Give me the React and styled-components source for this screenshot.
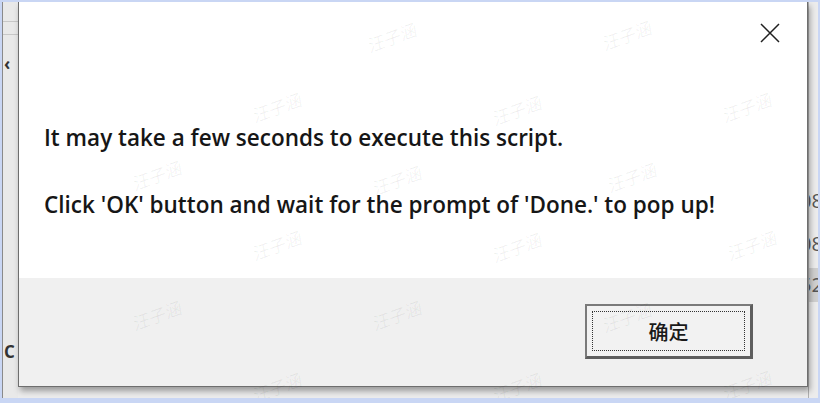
import React from 'react';
import styled, { createGlobalStyle } from 'styled-components';

const GlobalStyle = createGlobalStyle`
  html, body {
    margin: 0;
    padding: 0;
    background: #c9d6f4;
  }
  body {
    font-family: "Open Sans", "Noto Sans", "Noto Sans CJK SC", sans-serif;
  }
`;

const WATERMARKS = [
  [365, 22], [600, 20], [250, 92], [490, 95], [720, 92], [130, 160],
  [370, 165], [605, 162], [250, 230], [490, 232], [725, 230], [130, 300],
  [370, 300], [600, 302], [250, 372], [490, 372], [720, 370],
];

const App = () => {
  return (
    <>
      <GlobalStyle />
      <Frame>
        <SideStrip>
          <StripLine />
          <StripLine />
          <StripGlyph $top={52}>‹</StripGlyph>
          <StripGlyph $top={340}>C</StripGlyph>
        </SideStrip>

        <Dialog>
          <Body>
            <CloseButton aria-label="Close">
              <svg width="22" height="22" viewBox="0 0 22 22">
                <path d="M2 2 L20 20 M20 2 L2 20" stroke="#202020" strokeWidth="1.5" fill="none" />
              </svg>
            </CloseButton>
            <Message>
              <Line>It may take a few seconds to execute this script.</Line>
              <Line>Click 'OK' button and wait for the prompt of 'Done.' to pop up!</Line>
            </Message>
          </Body>
          <Footer>
            <OkButton>
              <FocusRing>确定</FocusRing>
            </OkButton>
          </Footer>
        </Dialog>

        <RightStrip>
          <RightCell $top={182}>08</RightCell>
          <RightCell $top={225}>08</RightCell>
          <RightCell $top={266} $shade>52</RightCell>
        </RightStrip>

        {WATERMARKS.map(([x, y], i) => (
          <Watermark key={i} style={{ left: x, top: y }}>汪子涵</Watermark>
        ))}
      </Frame>
    </>
  );
};

export default App;

const Frame = styled.div`
  position: relative;
  width: 816px;
  height: 396px;
  margin: 2px 2px 5px 2px;
  background: #ececec;
  display: flex;
  overflow: hidden;
`;

const SideStrip = styled.div`
  position: relative;
  width: 15px;
  flex: none;
  background: #e9e9e9;
  border-left: 1px solid #8a8a8a;
  padding-top: 19px;
  display: flex;
  flex-direction: column;
  gap: 12px;
`;

const StripLine = styled.div`
  height: 1px;
  background: #c8c8c8;
`;

const StripGlyph = styled.span`
  position: absolute;
  left: 1px;
  top: ${(p) => p.$top}px;
  font-family: "Open Sans", sans-serif;
  font-size: 17px;
  line-height: 20px;
  font-weight: 700;
  color: #333;
`;

const Dialog = styled.div`
  width: 788px;
  height: 384px;
  flex: none;
  display: flex;
  flex-direction: column;
  border: 1px solid #6e6e6e;
  border-top: none;
  box-shadow: 2px 4px 6px rgba(0, 0, 0, 0.35);
  z-index: 1;
`;

const Body = styled.div`
  position: relative;
  height: 276px;
  background: #ffffff;
  padding: 121px 0 0 25px;
  box-sizing: border-box;
`;

const CloseButton = styled.div`
  position: absolute;
  top: 20px;
  right: 26px;
  width: 22px;
  height: 22px;
`;

const Message = styled.div`
  display: flex;
  flex-direction: column;
  gap: 37px;
`;

const Line = styled.div`
  font-size: 22.5px;
  font-weight: 600;
  line-height: 30px;
  color: #161616;
  letter-spacing: 0;
`;

const Footer = styled.div`
  flex: 1;
  background: #f0f0f0;
  display: flex;
  justify-content: flex-end;
  padding: 26px 54px 0 0;
`;

const OkButton = styled.div`
  width: 168px;
  height: 55px;
  box-sizing: border-box;
  border: 2px solid #7a7a7a;
  border-right: 3px solid #5e5e5e;
  border-bottom: 3px solid #5e5e5e;
  background: #f2f2f2;
  padding: 5px;
`;

const FocusRing = styled.div`
  height: 100%;
  box-sizing: border-box;
  border: 1.5px dotted #333;
  display: flex;
  align-items: center;
  justify-content: center;
  font-family: "Noto Sans CJK SC", sans-serif;
  font-size: 20px;
  font-weight: 500;
  color: #1a1a1a;
`;

const RightStrip = styled.div`
  position: relative;
  flex: 1;
  background: #ececec;
  border-left: 1px solid #b0b0b0;
`;

const RightCell = styled.div`
  position: absolute;
  left: 0;
  right: 0;
  top: ${(p) => p.$top}px;
  height: 34px;
  background: ${(p) => (p.$shade ? '#cfcfcf' : 'transparent')};
  font-size: 20px;
  line-height: 34px;
  color: #555;
  text-indent: -9px;
  white-space: nowrap;
  overflow: hidden;
`;

const Watermark = styled.span`
  position: absolute;
  z-index: 2;
  font-family: "Noto Sans CJK SC", sans-serif;
  font-size: 17px;
  color: rgba(0, 0, 0, 0.06);
  transform: rotate(-20deg) skewX(-10deg);
  pointer-events: none;
`;
